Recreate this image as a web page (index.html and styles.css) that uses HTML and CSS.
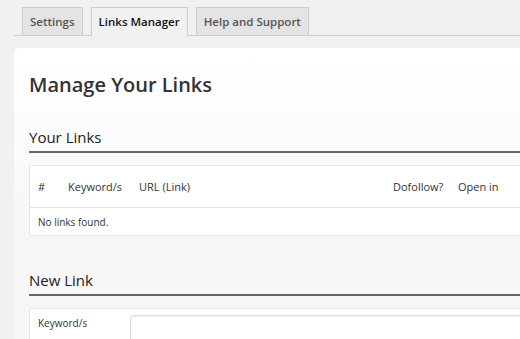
FILE: index.html
```html
<!DOCTYPE html>
<html>
<head>
<meta charset="utf-8">
<link rel="stylesheet" href="styles.css">
</head>
<body>
<div class="wrap">
  <nav class="tabs">
    <span class="tab">Settings</span>
    <span class="tab tab-active">Links Manager</span>
    <span class="tab">Help and Support</span>
  </nav>
  <main class="panel">
    <h1 class="title">Manage Your Links</h1>
    <h2 class="section-title">Your Links</h2>
    <div class="links-table">
      <div class="row head-row">
        <span class="c-num">#</span>
        <span class="c-kw">Keyword/s</span>
        <span class="c-url">URL (Link)</span>
        <span class="c-dof">Dofollow?</span>
        <span class="c-open">Open in</span>
      </div>
      <div class="row body-row">
        <span>No links found.</span>
      </div>
    </div>
    <h2 class="section-title section-new">New Link</h2>
    <div class="form-box">
      <label class="form-label">Keyword/s</label>
      <div class="form-input"></div>
    </div>
  </main>
</div>
</body>
</html>
```
FILE: styles.css
```css
html, body {
  margin: 0;
  padding: 0;
}
body {
  background: #f1f1f1;
  font-family: "Open Sans", "DejaVu Sans", sans-serif;
  color: #333;
  overflow: hidden;
}
.wrap {
  width: 640px;
}
.tabs {
  display: flex;
  gap: 8px;
  margin-left: 14px;
  padding: 7px 0 0 8px;
  border-bottom: 1px solid #ccc;
}
.tab {
  display: block;
  border: 1px solid #ccc;
  border-bottom: none;
  background: #e4e4e4;
  padding: 0 7px;
  font-size: 11.5px;
  font-weight: 600;
  line-height: 27px;
  color: #555;
}
.tab-active {
  background: #f1f1f1;
  color: #111;
  margin-bottom: -1px;
  padding-bottom: 1px;
}
.panel {
  margin: 12px 0 0 14px;
  background: linear-gradient(#ffffff 0, #fdfdfd 60px, #f6f6f6 190px, #f7f7f7 100%);
  border-radius: 5px 0 0 0;
  padding: 25px 0 40px 15px;
}
.title {
  margin: 0;
  font-size: 20px;
  font-weight: 600;
  line-height: 24px;
  color: #333;
}
.section-title {
  margin: 30px 0 0 0;
  font-size: 15px;
  font-weight: 400;
  line-height: 20px;
  padding-bottom: 4px;
  border-bottom: 2px solid #666;
  color: #222;
}
.section-new {
  margin-top: 34px;
}
.links-table {
  margin-top: 12px;
  background: #fff;
  border: 1px solid #e5e5e5;
  font-size: 11px;
  color: #333;
}
.row {
  display: flex;
  align-items: center;
  padding-left: 8px;
}
.head-row {
  height: 41px;
  border-bottom: 1px solid #e5e5e5;
}
.body-row {
  height: 27px;
  font-size: 10px;
}
.c-num { width: 30px; }
.c-kw { width: 71px; }
.c-url { width: 254px; }
.c-dof { width: 65px; }
.c-open { flex: 1; }
.form-box {
  margin-top: 12px;
  background: #fff;
  border: 1px solid #e5e5e5;
  display: flex;
  padding: 6px 0 20px 8px;
  font-size: 10px;
}
.form-label {
  width: 92px;
  line-height: 16px;
  color: #333;
}
.form-input {
  flex: 1;
  margin-top: 0;
  height: 40px;
  border: 1px solid #ddd;
  border-radius: 3px;
  box-shadow: inset 0 1px 2px rgba(0,0,0,0.07);
  background: #fff;
}
```
